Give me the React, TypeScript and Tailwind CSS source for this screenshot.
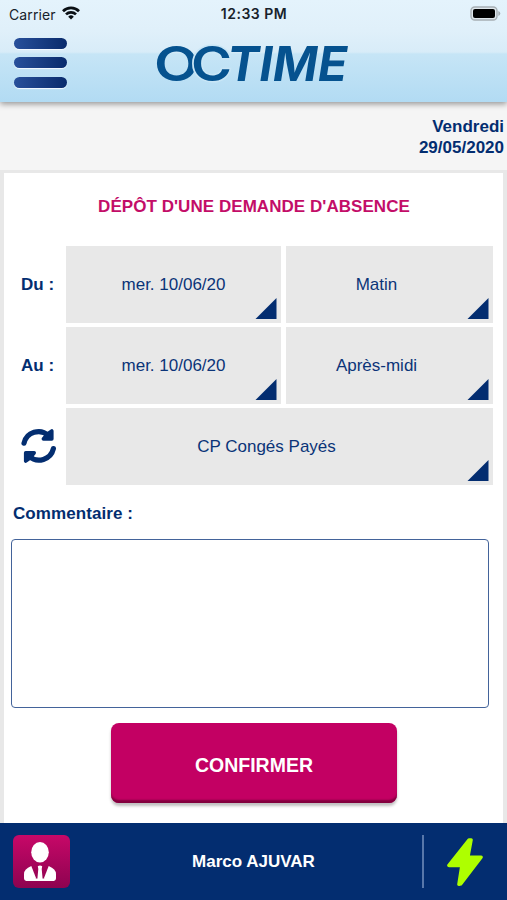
import React from 'react';

interface SelectCellProps {
  label: string;
  className?: string;
}

function SelectCell({ label, className = '' }: SelectCellProps) {
  return (
    <button className={`relative flex h-[77px] items-center justify-center bg-[#e8e8e8] text-[17px] text-[#0b3478] ${className}`}>
      {label}
      <svg viewBox="0 0 21 21" className="absolute bottom-1 right-[4.5px] size-[21.5px]">
        <path d="M21 0V21H0Z" fill="#032d70" />
      </svg>
    </button>
  );
}

function RefreshIcon() {
  return (
    <svg viewBox="0 0 36 36" className="ml-[17px] mb-[1px] size-[36px]" fill="none" stroke="#032d70" strokeLinecap="round" strokeLinejoin="round">
      <path d="M3 15.2A14.8 14.8 0 0 1 27.5 7.6" strokeWidth="5.2" />
      <path d="M30.8 3V11H22.4L26.5 6Z" fill="#032d70" strokeWidth="3.6" />
      <path d="M32.4 20.6A14.8 14.8 0 0 1 8 28.2" strokeWidth="5.2" />
      <path d="M4.7 33V24.8H13.2L9 30Z" fill="#032d70" strokeWidth="3.6" />
    </svg>
  );
}

function StatusBar() {
  return (
    <div className="grid h-7 grid-cols-3 items-center pl-[9px] pr-[6px] font-['Inter',sans-serif] text-[#17222b]">
      <div className="flex items-center gap-[6px] text-[14px]">
        <span className="w-[47px] tracking-[0.1px]">Carrier</span>
        <svg viewBox="0 0 18 14" className="mb-[2px] h-[14px] w-[18px]" fill="none" stroke="#0a0f14" strokeWidth="2.7">
          <path d="M1 5.2a11.4 11.4 0 0 1 16 0" />
          <path d="M4 8.4a7.2 7.2 0 0 1 10 0" />
          <path d="M9 13.6 6.2 10.7a4 4 0 0 1 5.6 0Z" fill="#0a0f14" stroke="none" />
        </svg>
      </div>
      <div className="-ml-[2px] -mt-[1px] text-center text-[14px] font-semibold tracking-[0.5px]">12:33 PM</div>
      <svg viewBox="0 0 31 15" className="mb-[2px] h-[15px] w-[31px] justify-self-end">
        <rect x="1" y="1" width="26" height="13" rx="3.8" fill="#dfe7ec" stroke="#a7afb4" strokeWidth="1.4" />
        <rect x="3" y="3" width="22" height="9" rx="2" fill="#000" />
        <path d="M28.3 5v5q2-.8 2-2.5t-2-2.5Z" fill="#a7afb4" />
      </svg>
    </div>
  );
}

function Logo() {
  return (
    <svg
      viewBox="0 0 200 44"
      className="h-[44px] w-[200px] overflow-visible"
      fill="#05528f"
      fontFamily="Inter, sans-serif"
      fontSize="48"
      fontWeight="600"
    >
      <text x="0" y="39" textLength="45" lengthAdjust="spacingAndGlyphs">O</text>
      <text x="37" y="39" textLength="41" lengthAdjust="spacingAndGlyphs" stroke="#c9e6f6" strokeWidth="3" paintOrder="stroke">C</text>
      <text x="0" y="0" transform="translate(71 39) skewX(-9)" textLength="120" lengthAdjust="spacingAndGlyphs" fontWeight="700">TIME</text>
    </svg>
  );
}

function Header() {
  return (
    <header className="relative h-[102px] bg-[linear-gradient(#e4f3fc_0px,#e0f0fa_30px,#d8ecf8_52px,#c6e5f6_54px,#b2dbf3_102px)] shadow-[0_2px_6px_rgba(0,0,0,0.4)]">
      <StatusBar />
      <div className="flex items-start pl-[14px]">
        <div className="mt-[10px] flex flex-col gap-[8.4px]">
          {[0, 1, 2].map(bar => (
            <div
              key={bar}
              className="h-[11px] w-[53px] rounded-full bg-linear-to-r from-[#28509b] to-[#092b6c] shadow-[0_1px_1px_#f4faff]"
            />
          ))}
        </div>
        <div className="ml-[87px] mt-[14px]">
          <Logo />
        </div>
      </div>
    </header>
  );
}

function Footer() {
  return (
    <footer className="flex h-[77px] items-center bg-[#032d70] pl-[13px]">
      <div className="flex h-[53px] w-[57px] items-center justify-center rounded-md bg-linear-to-b from-[#c70868] to-[#8e0350]">
        <svg viewBox="0 0 32 40" className="mr-[3px] h-10 w-8" fill="#fff">
          <ellipse cx="16" cy="10.3" rx="8.8" ry="10.3" />
          <path d="M7.3 24 11.8 35.5V39H3Q0 39 0 36V32Q0 27 7.3 24Z" />
          <path d="M24.7 24 20.2 35.5V39H29Q32 39 32 36V32Q32 27 24.7 24Z" />
          <path d="M13.8 24.3Q16 22.7 18.2 24.3L17.7 27 18.5 35.5V39H13.5V35.5L14.3 27Z" />
          <path d="M2 36.5H30V39H2Z" />
        </svg>
      </div>
      <div className="flex-1 pl-[15px] text-center text-[17px] font-bold text-white">Marco AJUVAR</div>
      <div className="h-[53px] w-[2px] bg-[#5877aa]" />
      <svg viewBox="0 0 36 50" className="ml-[23px] mr-[24px] h-[50px] w-9">
        <path
          d="M22 3 2 28.4H15L12 47.2 13.6 46.8 34 20.2H20.8L24 3Z"
          fill="#aeff00"
          stroke="#aeff00"
          strokeWidth="3.6"
          strokeLinejoin="round"
        />
      </svg>
    </footer>
  );
}

export default function App() {
  return (
    <div className="flex h-[900px] w-[507px] flex-col overflow-hidden bg-[#e8e8e8] font-['Liberation_Sans',Arial,sans-serif] text-[#032d70]">
      <Header />
      <div className="h-[68px] bg-[#f5f5f5] pr-[3px] pt-[14px] text-right text-[17px] font-bold leading-[21px]">
        <p>Vendredi</p>
        <p>29/05/2020</p>
      </div>

      <main className="mx-1 mt-[3px] flex-1 bg-white pr-[10px]">
        <h1 className="pl-[11px] pt-6 text-center text-[17px] font-bold leading-5 tracking-[0.05px] text-[#c30d68]">
          DÉPÔT D'UNE DEMANDE D'ABSENCE
        </h1>
        <div className="mt-[29px] grid grid-cols-[62px_215px_212px] items-center gap-y-[4px]">
          <span className="pl-[17px] text-[17px] font-bold">Du :</span>
          <SelectCell label="mer. 10/06/20" />
          <SelectCell label="Matin" className="ml-[5px] pr-[26px]" />
          <span className="pl-[17px] text-[17px] font-bold">Au :</span>
          <SelectCell label="mer. 10/06/20" />
          <SelectCell label="Après-midi" className="ml-[5px] pr-[26px]" />
          <RefreshIcon />
          <SelectCell label="CP Congés Payés" className="col-span-2 pr-[26px]" />
        </div>
        <label className="mt-[19px] block pl-[9px] text-[17px] font-bold leading-5 tracking-[0.07px]">
          Commentaire :
        </label>
        <textarea className="ml-[7px] mt-[15px] block h-[169px] w-[478px] resize-none rounded-[4px] border-[1.5px] border-[#43639a] bg-white" />
        <button className="ml-[107px] mt-[15px] block h-[80px] w-[286px] rounded-lg bg-[#c30063] pt-[6px] text-[19.5px] font-bold text-white shadow-[inset_0_-4px_2px_-1px_#82003e,0_3px_3px_rgba(0,0,0,0.25)]">
          CONFIRMER
        </button>
      </main>
      <Footer />
    </div>
  );
}
